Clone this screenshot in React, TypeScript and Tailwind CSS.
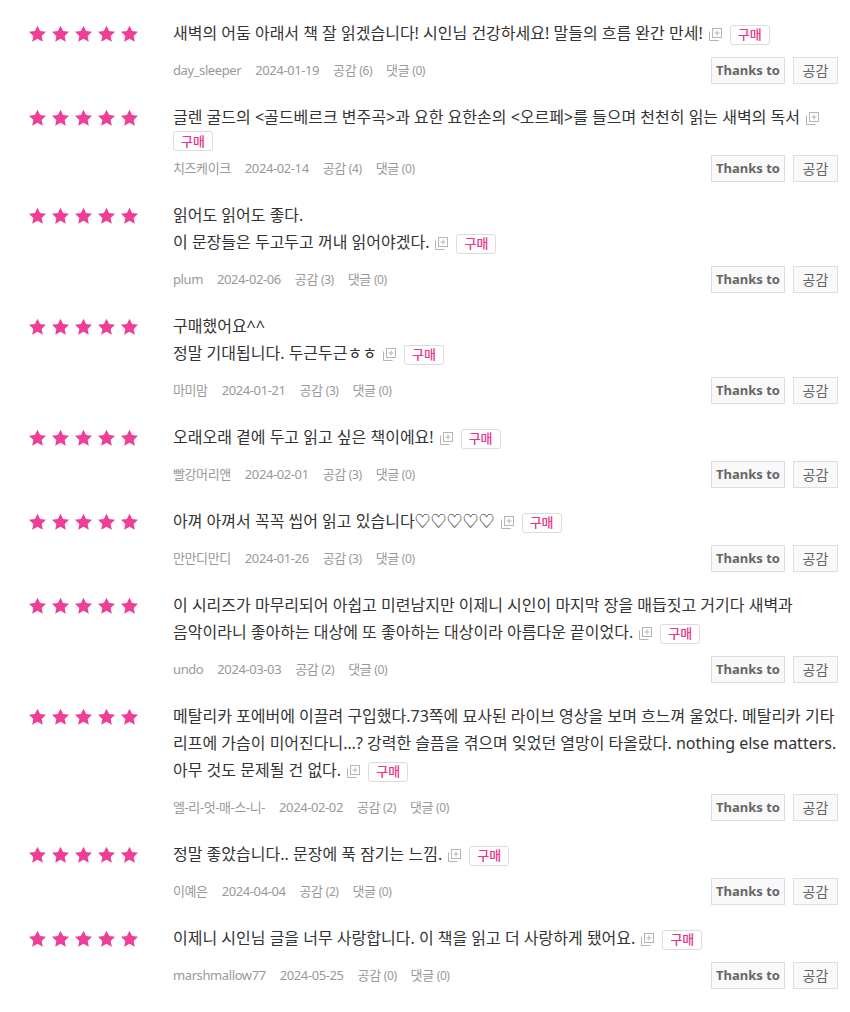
import React from "react";

type Review = {
  lines: string[];
  user: string;
  date: string;
  likes: number;
  badgeBlock?: boolean;
};

const reviews: Review[] = [
  {
    lines: ["새벽의 어둠 아래서 책 잘 읽겠습니다! 시인님 건강하세요! 말들의 흐름 완간 만세!"],
    user: "day_sleeper",
    date: "2024-01-19",
    likes: 6,
  },
  {
    lines: ["글렌 굴드의 <골드베르크 변주곡>과 요한 요한손의 <오르페>를 들으며 천천히 읽는 새벽의 독서"],
    user: "치즈케이크",
    date: "2024-02-14",
    likes: 4,
    badgeBlock: true,
  },
  {
    lines: ["읽어도 읽어도 좋다.", "이 문장들은 두고두고 꺼내 읽어야겠다."],
    user: "plum",
    date: "2024-02-06",
    likes: 3,
  },
  {
    lines: ["구매했어요^^", "정말 기대됩니다. 두근두근ㅎㅎ"],
    user: "마미맘",
    date: "2024-01-21",
    likes: 3,
  },
  {
    lines: ["오래오래 곁에 두고 읽고 싶은 책이에요!"],
    user: "빨강머리앤",
    date: "2024-02-01",
    likes: 3,
  },
  {
    lines: ["아껴 아껴서 꼭꼭 씹어 읽고 있습니다♡♡♡♡♡"],
    user: "만만디만디",
    date: "2024-01-26",
    likes: 3,
  },
  {
    lines: [
      "이 시리즈가 마무리되어 아쉽고 미련남지만 이제니 시인이 마지막 장을 매듭짓고 거기다 새벽과",
      "음악이라니 좋아하는 대상에 또 좋아하는 대상이라 아름다운 끝이었다.",
    ],
    user: "undo",
    date: "2024-03-03",
    likes: 2,
  },
  {
    lines: [
      "메탈리카 포에버에 이끌려 구입했다.73쪽에 묘사된 라이브 영상을 보며 흐느껴 울었다. 메탈리카 기타",
      "리프에 가슴이 미어진다니…? 강력한 슬픔을 겪으며 잊었던 열망이 타올랐다. nothing else matters.",
      "아무 것도 문제될 건 없다.",
    ],
    user: "엘-리-엇-매-스-니-",
    date: "2024-02-02",
    likes: 2,
  },
  {
    lines: ["정말 좋았습니다.. 문장에 푹 잠기는 느낌."],
    user: "이예은",
    date: "2024-04-04",
    likes: 2,
  },
  {
    lines: ["이제니 시인님 글을 너무 사랑합니다. 이 책을 읽고 더 사랑하게 됐어요."],
    user: "marshmallow77",
    date: "2024-05-25",
    likes: 0,
  },
];

const Star = () => (
  <svg width="19" height="18" viewBox="0 0 24 23" className="block">
    <path
      d="M12 0.8l3.3 7 7.6 0.9-5.6 5.2 1.5 7.6L12 17.7l-6.8 3.8 1.5-7.6L1.1 8.7l7.6-0.9z"
      fill="#ee3e96"
    />
  </svg>
);

const ExpandIcon = () => (
  <svg width="13" height="13" viewBox="0 0 13 13" className="inline-block align-middle">
    <path d="M0.5 3.5V12.5H9.5" fill="none" stroke="#b5b5b5" />
    <rect x="3.5" y="0.5" width="9" height="9" fill="#fff" stroke="#b5b5b5" />
    <path d="M8 2.5v5M5.5 5h5" stroke="#b5b5b5" />
  </svg>
);

const BuyBadge = ({ block }: { block?: boolean }) => (
  <span
    className={
      (block ? "flex w-[40px] " : "inline-flex w-[40px] ml-[8px] align-middle ") +
      "h-[20px] items-center justify-center rounded-[3px] border border-[#dcdcdc] bg-white text-[13px] font-medium text-[#e8358b] tracking-normal leading-none"
    }
  >
    구매
  </span>
);

function ReviewRow({ r }: { r: Review }) {
  return (
    <div className="flex pt-[20px]">
      <div className="w-[173px] shrink-0 pl-[28px] pt-[5px]">
        <div className="flex gap-[4px]">
          <Star />
          <Star />
          <Star />
          <Star />
          <Star />
        </div>
      </div>
      <div className="flex-1 pr-[12px] min-w-0">
        <div className="text-[16px] leading-[27px] text-[#333] whitespace-nowrap">
          {r.lines.map((line, i) => {
            const last = i === r.lines.length - 1;
            return (
              <div key={i}>
                {line}
                {last && (
                  <>
                    <span className="ml-[6px]" />
                    <ExpandIcon />
                    {!r.badgeBlock && <BuyBadge />}
                  </>
                )}
              </div>
            );
          })}
          {r.badgeBlock && <BuyBadge block />}
        </div>
        <div
          className={
            (r.badgeBlock ? "mt-[4px] " : "mt-[10px] ") +
            "flex h-[27px] items-center justify-between"
          }
        >
          <div className="flex items-center gap-[14px] text-[13px] text-[#999] tracking-[-0.4px]">
            <span>{r.user}</span>
            <span>{r.date}</span>
            <span>
              공감 <span className="text-[12px]">({r.likes})</span>
            </span>
            <span>
              댓글 <span className="text-[12px]">(0)</span>
            </span>
          </div>
          <div className="flex gap-[8px]">
            <button className="flex h-[27px] w-[74px] items-center justify-center border border-[#dedede] bg-[#f9f9f9] text-[13px] font-bold text-[#666]">
              Thanks to
            </button>
            <button className="flex h-[27px] w-[45px] items-center justify-center border border-[#dedede] bg-[#f9f9f9] text-[14px] text-[#666]">
              공감
            </button>
          </div>
        </div>
      </div>
    </div>
  );
}

export default function App() {
  return (
    <div
      className="w-[850px] min-h-[1012px] bg-white"
      style={{ fontFamily: '"Noto Sans", "Noto Sans CJK KR", sans-serif' }}
    >
      {reviews.map((r, i) => (
        <ReviewRow key={i} r={r} />
      ))}
    </div>
  );
}
